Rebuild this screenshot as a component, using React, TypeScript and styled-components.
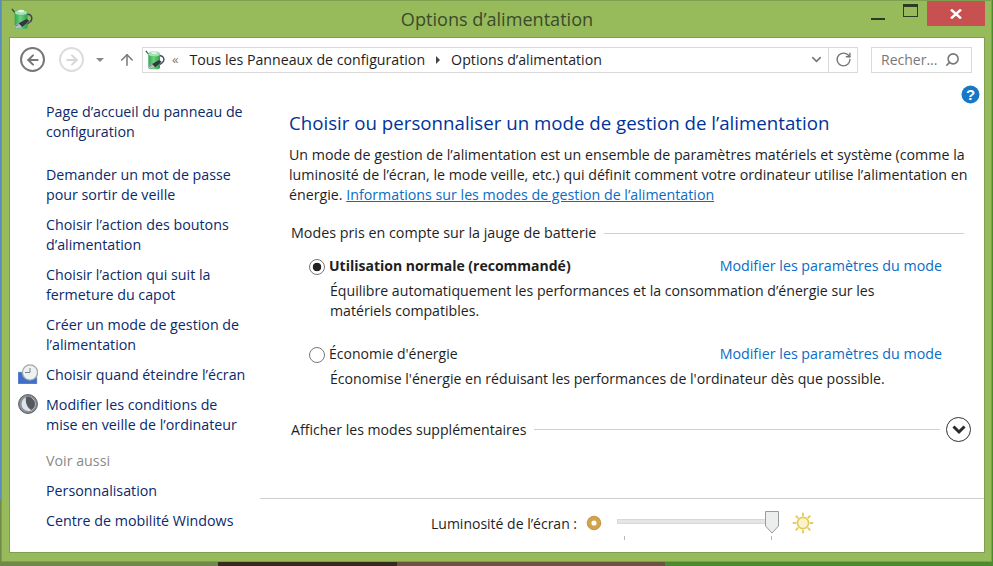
import styled, { createGlobalStyle } from "styled-components";
import { ArrowLeft, ArrowRight, ArrowUp, ChevronDown, RotateCw, Search } from "lucide-react";

const GlobalStyle = createGlobalStyle`
  html, body {
    margin: 0;
    padding: 0;
    width: 993px;
    height: 566px;
    overflow: hidden;
    font-family: "Open Sans", "Noto Sans", sans-serif;
  }
`;

const PowerIcon = ({ size }: { size: number }) => (
  <svg width={size} height={size} viewBox="0 0 24 24">
    <defs>
      <linearGradient id="cupBody" x1="0" x2="1" y1="0" y2="0">
        <stop offset="0" stopColor="#2aa84c" />
        <stop offset="0.45" stopColor="#6fd07f" />
        <stop offset="1" stopColor="#2f9f4b" />
      </linearGradient>
    </defs>
    <path d="M1 1 L5 6" stroke="#3c4450" strokeWidth="1.4" fill="none" />
    <path d="M17 7 C23 6 24 12 21 15 L17 18" stroke="#3d4658" strokeWidth="1.6" fill="none" />
    <path d="M4 5 h14 v16 a3 2 0 0 1 -3 2 H7 a3 2 0 0 1 -3 -2 Z" fill="url(#cupBody)" />
    <ellipse cx="11" cy="5" rx="7" ry="3" fill="#a7e3b2" stroke="#4fb56a" strokeWidth="0.6" />
    <ellipse cx="11" cy="3.4" rx="3.4" ry="1.5" fill="#eceeee" />
    <path d="M8 17 L17 12 L20 14 L12 21 Z" fill="#34373f" />
    <path d="M3 20 L8 16.5 L12 20.5 L6 22.5 Z" fill="#b9bcc0" />
    <path d="M4.5 20 L8 18" stroke="#55585e" strokeWidth="0.8" />
  </svg>
);

const ClockIcon = () => (
  <svg width="20" height="20" viewBox="0 0 20 20">
    <path d="M0 8 H6 V13 H19 V20 H0 Z" fill="#3f6fc8" stroke="#9fb6dd" strokeWidth="0.5" />
    <circle cx="12" cy="8.5" r="7.6" fill="#eef1f2" stroke="#a3a8a8" strokeWidth="1.4" />
    <path d="M12 4 V8.5 H7" stroke="#7b8284" strokeWidth="1" fill="none" />
  </svg>
);

const SleepIcon = () => (
  <svg width="20" height="20" viewBox="0 0 20 20">
    <circle cx="10" cy="10" r="9.4" fill="#8d9298" stroke="#54585e" strokeWidth="1" />
    <circle cx="10.5" cy="10" r="7" fill="#dde4ec" />
    <path d="M8 3.2 A7 7 0 0 1 17 9.5 A7 7 0 0 1 13.5 16 C9.5 14 7 9 8 3.2 Z" fill="#55585d" />
  </svg>
);

const HelpIcon = () => (
  <svg width="19" height="19" viewBox="0 0 19 19">
    <circle cx="9.5" cy="9.5" r="9" fill="#1878c8" />
    <text x="9.5" y="15" textAnchor="middle" fontSize="15" fontWeight="700" fontFamily="Liberation Sans, sans-serif" fill="#fff">?</text>
  </svg>
);

const DimIcon = () => (
  <svg width="16" height="16" viewBox="0 0 16 16">
    <circle cx="8" cy="8" r="6.8" fill="#d2a24c" stroke="#b98a36" strokeWidth="0.8" />
    <circle cx="8" cy="8" r="2.6" fill="#fff" />
  </svg>
);

const BrightIcon = () => (
  <svg width="22" height="22" viewBox="0 0 22 22">
    <g stroke="#e6cd62" strokeWidth="2" strokeLinecap="round">
      <path d="M11 1.5 V3.5 M11 18.5 V20.5 M1.5 11 H3.5 M18.5 11 H20.5 M4.3 4.3 L5.7 5.7 M16.3 16.3 L17.7 17.7 M4.3 17.7 L5.7 16.3 M16.3 5.7 L17.7 4.3" />
    </g>
    <circle cx="11" cy="11" r="5.6" fill="#fbf3c9" stroke="#e5c955" strokeWidth="1.6" />
  </svg>
);

const App = () => (
  <Page>
    <GlobalStyle />
    <Window>
      <TitleBar>
        <TitleIcon>
          <PowerIcon size={22} />
        </TitleIcon>
        <TitleText>Options d’alimentation</TitleText>
        <Controls>
          <MinButton aria-label="Réduire" />
          <MaxButton aria-label="Agrandir">
            <MaxGlyph />
          </MaxButton>
          <CloseButton aria-label="Fermer">
            <svg width="12" height="10" viewBox="0 0 12 10">
              <path d="M1 0.5 L11 9.5 M11 0.5 L1 9.5" stroke="#fff" strokeWidth="2.4" />
            </svg>
          </CloseButton>
        </Controls>
      </TitleBar>
      <Client>
        <NavBar>
          <RoundNav>
            <ArrowLeft size={16} strokeWidth={3} color="#777" />
          </RoundNav>
          <RoundNav disabled>
            <ArrowRight size={16} strokeWidth={3} color="#d6d6d6" />
          </RoundNav>
          <HistoryCaret />
          <UpButton>
            <ArrowUp size={18} strokeWidth={2} color="#777" />
          </UpButton>
          <AddressBar>
            <PowerIcon size={20} />
            <Chevrons>«</Chevrons>
            <Crumb>Tous les Panneaux de configuration</Crumb>
            <CrumbArrow />
            <Crumb>Options d’alimentation</Crumb>
            <AddressEnd>
              <ChevronDown size={15} strokeWidth={2.5} color="#777" />
            </AddressEnd>
            <RefreshBox>
              <RotateCw size={17} strokeWidth={2} color="#777" />
            </RefreshBox>
          </AddressBar>
          <SearchBox>
            <SearchText>Recher...</SearchText>
            <Search size={15} strokeWidth={2.5} color="#777" style={{ transform: "scaleX(-1)" }} />
          </SearchBox>
        </NavBar>
        <Body>
          <Sidebar>
            <HomeLink>Page d’accueil du panneau de configuration</HomeLink>
            <SideLink>Demander un mot de passe pour sortir de veille</SideLink>
            <SideLink>Choisir l’action des boutons d’alimentation</SideLink>
            <SideLink>Choisir l’action qui suit la fermeture du capot</SideLink>
            <SideLink>Créer un mode de gestion de l’alimentation</SideLink>
            <SideLink>
              <SideIcon>
                <ClockIcon />
              </SideIcon>
              Choisir quand éteindre l’écran
            </SideLink>
            <SideLink>
              <SideIcon>
                <SleepIcon />
              </SideIcon>
              Modifier les conditions de mise en veille de l’ordinateur
            </SideLink>
            <SeeAlso>Voir aussi</SeeAlso>
            <SideLink>Personnalisation</SideLink>
            <SideLink>Centre de mobilité Windows</SideLink>
          </Sidebar>
          <Main>
            <Content>
              <HelpBadge>
                <HelpIcon />
              </HelpBadge>
              <Heading>Choisir ou personnaliser un mode de gestion de l’alimentation</Heading>
              <Intro>
                Un mode de gestion de l’alimentation est un ensemble de paramètres matériels et système (comme la
                luminosité de l’écran, le mode veille, etc.) qui définit comment votre ordinateur utilise l’alimentation en
                énergie. <IntroLink>Informations sur les modes de gestion de l’alimentation</IntroLink>
              </Intro>
              <SectionHead>
                <span>Modes pris en compte sur la jauge de batterie</span>
                <Rule />
              </SectionHead>
              <Plan>
                <PlanRow>
                  <Radio $checked />
                  <PlanName $bold>Utilisation normale (recommandé)</PlanName>
                  <PlanLink>Modifier les paramètres du mode</PlanLink>
                </PlanRow>
                <PlanDesc>
                  Équilibre automatiquement les performances et la consommation d’énergie sur les
                  <br />
                  matériels compatibles.
                </PlanDesc>
              </Plan>
              <Plan>
                <PlanRow>
                  <Radio />
                  <PlanName>Économie d'énergie</PlanName>
                  <PlanLink>Modifier les paramètres du mode</PlanLink>
                </PlanRow>
                <PlanDesc>Économise l'énergie en réduisant les performances de l'ordinateur dès que possible.</PlanDesc>
              </Plan>
              <MoreRow>
                <span>Afficher les modes supplémentaires</span>
                <Rule />
                <ExpandButton>
                  <svg width="14" height="10" viewBox="0 0 14 10">
                    <path d="M1.5 1.5 L7 7 L12.5 1.5" stroke="#2b2b2b" strokeWidth="3" fill="none" />
                  </svg>
                </ExpandButton>
              </MoreRow>
            </Content>
            <BrightnessBar>
              <BrightnessLabel>Luminosité de l’écran :</BrightnessLabel>
              <DimIcon />
              <Slider>
                <Track />
                <Thumb>
                  <svg width="14" height="23" viewBox="0 0 14 23">
                    <path d="M0.5 0.5 H13.5 V15 L7 22 L0.5 15 Z" fill="#eceded" stroke="#9a9a9a" />
                  </svg>
                </Thumb>
                <Ticks>
                  <Tick />
                  <Tick />
                </Ticks>
              </Slider>
              <BrightIcon />
            </BrightnessBar>
          </Main>
        </Body>
      </Client>
    </Window>
  </Page>
);

export default App;

const Page = styled.div`
  width: 993px;
  height: 566px;
  background:
    linear-gradient(#5b8db8, #5b8db8) 0 0 / 1px 500px no-repeat,
    linear-gradient(90deg, #6f8a4a 0 22%, #3a2a1e 22% 40%, #6b5340 40% 67%, #4a8a30 67% 100%);
`;

const Window = styled.div`
  width: 991px;
  height: 562px;
  margin-left: 1px;
  box-sizing: border-box;
  background: #97bb5b;
  border: 1px solid #7f9f50;
  padding: 0 6px 8px 7px;
  display: flex;
  flex-direction: column;
`;

const TitleBar = styled.div`
  height: 36px;
  flex: none;
  position: relative;
  display: flex;
  align-items: center;
  justify-content: center;
`;

const TitleIcon = styled.div`
  position: absolute;
  left: 2px;
  top: 7px;
  display: flex;
`;

const TitleText = styled.div`
  font-size: 18.1px;
  color: #3b4a2a;
`;

const Controls = styled.div`
  position: absolute;
  right: 0;
  top: 0;
  display: flex;
  align-items: flex-start;
`;

const ControlButton = styled.button`
  border: none;
  background: none;
  padding: 0;
  height: 25px;
  display: flex;
  align-items: center;
  justify-content: center;
`;

const MinButton = styled(ControlButton)`
  width: 32px;
  position: relative;

  &::after {
    content: "";
    position: absolute;
    left: 10px;
    top: 17px;
    width: 14px;
    height: 2px;
    background: #2f3a24;
  }
`;

const MaxButton = styled(ControlButton)`
  width: 34px;
`;

const MaxGlyph = styled.div`
  width: 13px;
  height: 9px;
  border: 1px solid #2f3a24;
  border-top-width: 3px;
  margin-top: -6px;
`;

const CloseButton = styled(ControlButton)`
  width: 58px;
  background: #c75050;
`;

const Client = styled.div`
  flex: 1;
  min-height: 0;
  background: #fff;
  border: 1px solid #7f9f50;
  display: flex;
  flex-direction: column;
`;

const NavBar = styled.div`
  height: 43px;
  flex: none;
  display: flex;
  align-items: center;
  padding: 0 12px 0 10px;
  box-sizing: border-box;
`;

const RoundNav = styled.div<{ disabled?: boolean }>`
  width: 25px;
  height: 25px;
  box-sizing: border-box;
  border-radius: 50%;
  border: 2px solid ${({ disabled }) => (disabled ? "#dcdcdc" : "#777")};
  display: flex;
  align-items: center;
  justify-content: center;
  margin-right: 14px;
`;

const HistoryCaret = styled.div`
  width: 0;
  height: 0;
  border-left: 4px solid transparent;
  border-right: 4px solid transparent;
  border-top: 4px solid #888;
  margin-left: -2px;
`;

const UpButton = styled.div`
  display: flex;
  margin: 0 6px 0 14px;
`;

const AddressBar = styled.div`
  flex: 1;
  height: 26px;
  box-sizing: border-box;
  border: 1px solid #d9d9d9;
  display: flex;
  align-items: center;
  padding-left: 2px;
  font-size: 14.2px;
  color: #1e1e1e;
`;

const Chevrons = styled.span`
  color: #777;
  font-size: 13px;
  margin: -2px 11px 0 7px;
`;

const Crumb = styled.span`
  white-space: nowrap;
`;

const CrumbArrow = styled.span`
  width: 0;
  height: 0;
  border-top: 4px solid transparent;
  border-bottom: 4px solid transparent;
  border-left: 4px solid #444;
  margin: 0 11px;
`;

const AddressEnd = styled.div`
  margin-left: auto;
  display: flex;
  padding-right: 4px;
`;

const RefreshBox = styled.div`
  width: 28px;
  height: 24px;
  border-left: 1px solid #d9d9d9;
  display: flex;
  align-items: center;
  justify-content: center;
`;

const SearchBox = styled.div`
  width: 101px;
  height: 26px;
  box-sizing: border-box;
  margin-left: 13px;
  border: 1px solid #d9d9d9;
  display: flex;
  align-items: center;
  justify-content: space-between;
  padding: 0 11px 0 9px;
`;

const SearchText = styled.span`
  font-size: 14px;
  color: #777;
`;

const Body = styled.div`
  flex: 1;
  min-height: 0;
  display: flex;
`;

const Sidebar = styled.nav`
  width: 250px;
  flex: none;
  box-sizing: border-box;
  padding: 21px 0 0 36px;
  display: flex;
  flex-direction: column;
  gap: 10px;
`;

const SideLink = styled.a`
  position: relative;
  display: block;
  width: 205px;
  font-size: 14.25px;
  line-height: 20px;
  color: #0a2a6c;
`;

const HomeLink = styled(SideLink)`
  margin-bottom: 13px;
`;

const SideIcon = styled.span`
  position: absolute;
  left: -28px;
  top: -1px;
  display: flex;
`;

const SeeAlso = styled.div`
  font-size: 14.25px;
  line-height: 20px;
  color: #8a8a8a;
  margin: 6px 0 0;
`;

const Main = styled.main`
  flex: 1;
  min-width: 0;
  display: flex;
  flex-direction: column;
`;

const Content = styled.div`
  flex: 1;
  position: relative;
  padding: 29px 14px 0 29px;
`;

const HelpBadge = styled.div`
  position: absolute;
  right: 4px;
  top: 4px;
  display: flex;
`;

const Heading = styled.h1`
  margin: 0;
  font-size: 18.7px;
  line-height: 26px;
  font-weight: 400;
  color: #003399;
  white-space: nowrap;
`;

const Intro = styled.p`
  margin: 9px 0 0;
  font-size: 14.23px;
  line-height: 20px;
  color: #1e1e1e;
  width: 690px;
`;

const IntroLink = styled.a`
  color: #0a6cc4;
  text-decoration: underline;
`;

const SectionHead = styled.div`
  display: flex;
  align-items: center;
  gap: 8px;
  margin: 18px 6px 0 2px;
  font-size: 14.3px;
  line-height: 20px;
  color: #1e1e1e;
`;

const Rule = styled.div`
  flex: 1;
  height: 1px;
  background: #d0d0d0;
`;

const Plan = styled.div`
  margin: 13px 28px 0 20px;

  & + & {
    margin-top: 23px;
  }
`;

const PlanRow = styled.div`
  display: flex;
  align-items: center;
  line-height: 20px;
  font-size: 14px;
`;

const Radio = styled.div<{ $checked?: boolean }>`
  width: 16px;
  height: 16px;
  box-sizing: border-box;
  border-radius: 50%;
  border: 1px solid #777;
  background: ${({ $checked }) =>
    $checked ? "radial-gradient(circle, #222 0 4px, #fff 4.6px)" : "#fff"};
  margin: 2px 4px 0 0;
`;

const PlanName = styled.span<{ $bold?: boolean }>`
  font-weight: ${({ $bold }) => ($bold ? 700 : 400)};
  color: #1e1e1e;
`;

const PlanLink = styled.a`
  margin-left: auto;
  font-size: 14.25px;
  color: #0a6cc4;
`;

const PlanDesc = styled.div`
  margin: 5px 0 0 21px;
  font-size: 14.14px;
  line-height: 20px;
  color: #1e1e1e;
`;

const MoreRow = styled(SectionHead)`
  margin: 28px -1px 0 2px;
  font-size: 14.1px;
`;

const ExpandButton = styled.div`
  width: 25px;
  height: 25px;
  box-sizing: border-box;
  border-radius: 50%;
  border: 1px solid #333;
  display: flex;
  align-items: center;
  justify-content: center;
  margin-left: -2px;
`;

const BrightnessBar = styled.div`
  height: 54px;
  flex: none;
  box-sizing: border-box;
  border-top: 1px solid #cfcfcf;
  display: flex;
  align-items: center;
  padding: 0 0 5px 171px;
`;

const BrightnessLabel = styled.span`
  font-size: 14px;
  color: #1e1e1e;
  margin-right: 9px;
`;

const Slider = styled.div`
  position: relative;
  width: 161px;
  height: 30px;
  margin: 6px 14px 0 15px;
  flex: none;
`;

const Track = styled.div`
  position: absolute;
  left: 0;
  right: 0;
  top: 8px;
  height: 5px;
  background: #e4e6e6;
  border: 1px solid #d8d8d8;
  box-sizing: border-box;
`;

const Thumb = styled.div`
  position: absolute;
  left: 148px;
  top: 0;
  display: flex;
`;

const Ticks = styled.div`
  position: absolute;
  left: 7px;
  right: 6px;
  top: 25px;
  display: flex;
  justify-content: space-between;
`;

const Tick = styled.div`
  width: 1px;
  height: 4px;
  background: #b8b8b8;
`;
